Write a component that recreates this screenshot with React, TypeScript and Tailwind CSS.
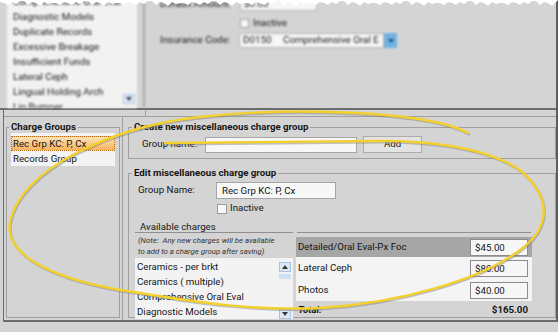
import React from 'react'

const topItems = [
  'Comprehensive Oral Eval',
  'Diagnostic Models',
  'Duplicate Records',
  'Excessive Breakage',
  'Insufficient Funds',
  'Lateral Ceph',
  'Lingual Holding Arch',
  'Lip Bumper',
]

const available = ['Ceramics - per brkt', 'Ceramics ( multiple)', 'Comprehensive Oral Eval', 'Diagnostic Models']

const chosen = [
  { name: 'Detailed/Oral Eval-Px Foc', amount: '$45.00', active: true },
  { name: 'Lateral Ceph', amount: '$80.00', active: false },
  { name: 'Photos', amount: '$40.00', active: false },
]

// jagged top edge of the cut-out screenshot
const tornPoints = () => {
  const pts: string[] = ['0,0']
  const depth = [2, 5, 3, 1, 4, 2, 6, 3, 2, 5, 1, 3, 4, 2, 5, 3]
  for (let x = 0, i = 0; x <= 558; x += 4, i++) {
    pts.push(`${x},${depth[(i * 7) % depth.length]}`)
  }
  pts.push('558,0')
  return pts.join(' ')
}

const loop =
  'M468 133 C430 112 300 106 200 117 C110 127 20 170 10 222 C4 258 60 282 140 293 C200 303 260 311 320 308 C400 303 480 280 520 250 C548 230 555 200 520 170 C490 150 440 141 380 141 L165 143'

function Arrow({ up }: { up?: boolean }) {
  return (
    <div className="w-[12px] h-[10px] bg-[#dce8f5] border border-[#a9c3df] flex items-center justify-center">
      <svg width="6" height="4" viewBox="0 0 6 4">
        <path d={up ? 'M0 4 L3 0 L6 4 Z' : 'M0 0 L3 4 L6 0 Z'} fill="#3a3a3a" />
      </svg>
    </div>
  )
}

export default function App() {
  return (
    <div className="relative w-[558px] h-[332px] overflow-hidden bg-[#d4d4d4] text-[9.7px] text-[#141414] font-['Roboto','Open_Sans',sans-serif]">
      <div className="flex flex-col w-[558px] h-[322px] border-r-2 border-[#5e5e5e]">
        {/* top, blurred part of the form */}
        <div className="flex h-[108px] overflow-hidden blur-[0.9px] text-[9.8px]">
          <div className="flex w-[147px] pl-[7px]">
            <div className="flex w-[130px] bg-[#f2f2f2]">
              <div className="flex flex-col flex-1 -mt-[6px] pl-[6px]">
                {topItems.map((t) => (
                  <div key={t} className="h-[15px] leading-[15px] whitespace-nowrap">{t}</div>
                ))}
              </div>
              <div className="flex flex-col justify-end pb-[4px] pr-[2px]">
                <Arrow />
              </div>
            </div>
            <div className="w-[8px] border-r-2 border-[#a9a9a9]" />
          </div>
          <div className="flex flex-col flex-1 pl-[13px]">
            <div className="flex items-center h-[14px] -mt-[3px]">
              <div className="w-[80px]">Default Amount:</div>
              <div className="w-[77px] h-[14px] bg-[#f6f6f6] border border-[#b4b4b4] pl-[3px] leading-[12px]">$0.00</div>
            </div>
            <div className="flex items-center h-[11px] mt-[7px] pl-[80px] gap-[4px]">
              <div className="w-[9px] h-[9px] bg-[#f8f8f8] border border-[#a0a0a0]" />
              <span>Inactive</span>
            </div>
            <div className="flex items-center h-[15px] mt-[4px]">
              <div className="w-[79px]">Insurance Code:</div>
              <div className="flex w-[158px] h-[15px]">
                <div className="flex flex-1 bg-[#f6f6f6] border border-[#b4b4b4] items-center overflow-hidden whitespace-nowrap">
                  <span className="w-[43px] pl-[3px]">D0150</span>
                  <span>Comprehensive Oral E</span>
                </div>
                <div className="w-[13px] bg-[#71b2e2] flex items-center justify-center">
                  <svg width="6" height="4" viewBox="0 0 6 4"><path d="M0 0 L3 4 L6 0 Z" fill="#1d4f7a" /></svg>
                </div>
              </div>
            </div>
          </div>
        </div>

        <div className="h-[2px] bg-[#6c6c6c]" />

        {/* bottom panel */}
        <div className="flex flex-col flex-1 ml-[3px] border-l border-b-2 border-[#6c6c6c]">
          <div className="flex h-[6px]">
            <div className="w-[142px] border-r border-[#a0a0a0]" />
          </div>
          <div className="flex flex-1 border-t border-[#a0a0a0]">
            {/* charge groups */}
            <div className="flex flex-col w-[119px] px-[2px] pt-[4px] border-r border-[#a0a0a0]">
              <fieldset className="flex flex-col h-[197px] border border-[#a0a0a0]">
                <legend className="ml-[2px] px-[2px] font-bold leading-[12px]">Charge Groups</legend>
                <div className="flex flex-col flex-1 mx-[4px] mb-[1px] bg-[#f3f3f3] pt-[3px]">
                  <div className="h-[15px] leading-[14px] pl-[1px] border border-dotted border-[#b86a10] bg-gradient-to-b from-[#fde3b8] to-[#f6b35b]">
                    Rec Grp KC: P, Cx
                  </div>
                  <div className="h-[15px] leading-[15px] pl-[2px]">Records Group</div>
                </div>
              </fieldset>
            </div>

            {/* right side */}
            <div className="flex flex-col flex-1 pl-[5px] pt-[4px]">
              <fieldset className="flex flex-col h-[38px] border border-[#a0a0a0]">
                <legend className="ml-[3px] px-[2px] font-bold leading-[12px]">Create new miscellaneous charge group</legend>
                <div className="flex items-center mt-[3px] pl-[13px]">
                  <div className="w-[63px]">Group name:</div>
                  <div className="w-[152px] h-[16px] bg-[#f7f7f7] border border-[#a6a6a6]" />
                  <div className="ml-[6px] w-[59px] h-[17px] bg-[#e3e3e3] border border-[#acacac] flex items-center justify-center">Add</div>
                </div>
              </fieldset>

              <fieldset className="flex flex-col h-[151px] mt-[8px] border border-[#a0a0a0]">
                <legend className="ml-[3px] px-[2px] font-bold leading-[12px]">Edit miscellaneous charge group</legend>
                <div className="flex items-center mt-[3px] pl-[9px]">
                  <div className="w-[78px]">Group Name:</div>
                  <div className="w-[120px] h-[17px] bg-[#f7f7f7] border border-[#a6a6a6] pl-[5px] leading-[15px]">Rec Grp KC: P, Cx</div>
                </div>
                <div className="flex items-center gap-[3px] mt-[4px] pl-[88px] h-[11px]">
                  <div className="w-[10px] h-[10px] bg-[#f8f8f8] border border-[#9c9c9c]" />
                  <span>Inactive</span>
                </div>

                <div className="flex flex-1 mt-[8px] pl-[6px] gap-[3px]">
                  {/* available charges */}
                  <div className="flex flex-col w-[158px]">
                    <div className="h-[11px] leading-[10px] pl-[5px] border-b border-[#8f8f8f]">Available charges</div>
                    <div className="mt-[2px] pl-[3px] text-[7.8px] italic leading-[11px] text-[#333]">
                      <div>(Note:&nbsp; Any new charges will be available</div>
                      <div>to add to a charge group after saving)</div>
                    </div>
                    <div className="flex flex-1 mt-[1px] bg-[#f3f3f3]">
                      <div className="flex flex-col flex-1 pt-[1px] pl-[2px]">
                        {available.map((a) => (
                          <div key={a} className="h-[15px] leading-[15px] whitespace-nowrap">{a}</div>
                        ))}
                      </div>
                      <div className="flex flex-col w-[14px] pt-[4px] pr-[2px]">
                        <Arrow up />
                        <div className="h-[5px] mt-[2px] bg-[#cfe0f2]" />
                        <div className="flex-1" />
                        <Arrow />
                      </div>
                    </div>
                  </div>

                  {/* selected charges */}
                  <div className="flex flex-col w-[236px]">
                    <div className="h-[11px] mx-[1px] border-b border-[#8f8f8f]" />
                    <div className="flex flex-col mt-[4px] bg-[#f4f4f4]">
                      {chosen.map((c, i) => (
                        <div
                          key={c.name}
                          className={`flex items-center justify-between pl-[2px] pr-[4px] ${i === 0 ? 'h-[20px] bg-[#a6a6a6]' : 'h-[22px]'}`}
                        >
                          <span>{c.name}</span>
                          <div className="w-[58px] h-[17px] bg-[#f7f7f7] border border-[#8c8c8c] pl-[4px] leading-[15px]">{c.amount}</div>
                        </div>
                      ))}
                    </div>
                    <div className="flex items-center justify-between h-[14px] mt-[2px] pl-[2px] pr-[4px] font-bold">
                      <span className="italic">Total:</span>
                      <span>$165.00</span>
                    </div>
                  </div>
                </div>
              </fieldset>
            </div>
          </div>
        </div>
      </div>

      {/* torn edge */}
      <svg className="absolute left-0 top-0 pointer-events-none" width="558" height="8" viewBox="0 0 558 8">
        <polygon points={tornPoints()} fill="#ffffff" />
      </svg>

      {/* yellow highlight loop */}
      <svg className="absolute inset-0 pointer-events-none" width="558" height="332" viewBox="0 0 558 332">
        <path d={loop} fill="none" stroke="#7a7a7a" strokeOpacity="0.45" strokeWidth="2.6" strokeLinecap="round" transform="translate(0.8 1.2)" />
        <path d={loop} fill="none" stroke="#f3d02c" strokeWidth="2.4" strokeLinecap="round" />
      </svg>
    </div>
  )
}
